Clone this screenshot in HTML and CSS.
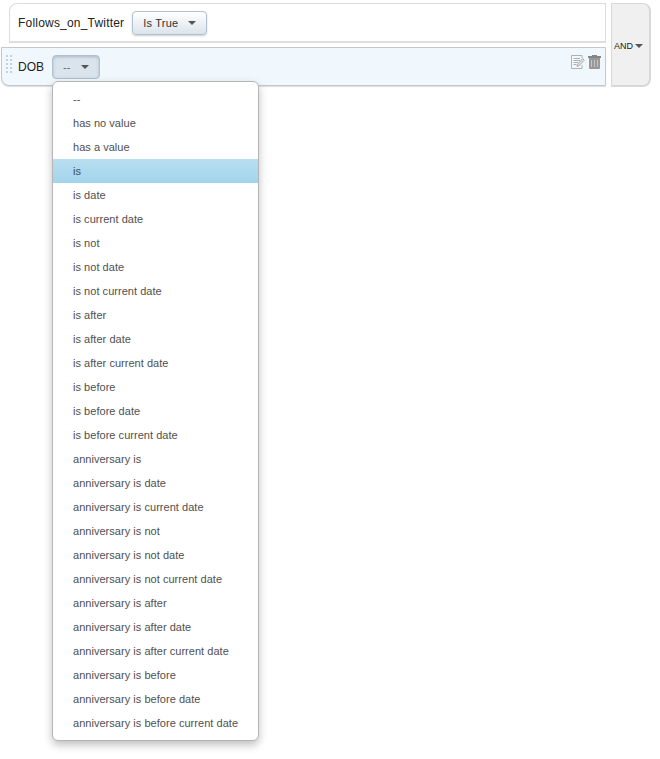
FILE: index.html
```html
<!DOCTYPE html>
<html lang="en">
<head>
<meta charset="utf-8">
<title>Filter rules</title>
<link rel="stylesheet" href="styles.css">
</head>
<body>
<div class="filter">
  <div class="rules">
    <div class="rule">
      <span class="field">Follows_on_Twitter</span>
      <button class="select"><span>Is True</span><i class="caret"></i></button>
    </div>
    <div class="rule rule-active">
      <svg class="grip" width="6" height="18" viewBox="0 0 6 18" fill="#c3d2dc">
        <path d="M0 0h2v2H0zM4 0h2v2H4zM0 4h2v2H0zM4 4h2v2H4zM0 8h2v2H0zM4 8h2v2H4zM0 12h2v2H0zM4 12h2v2H4zM0 16h2v2H0zM4 16h2v2H4z"/>
      </svg>
      <span class="field">DOB</span>
      <div class="picker">
        <button class="select select-open"><span>--</span><i class="caret"></i></button>
        <ul class="menu">
          <li>--</li>
          <li>has no value</li>
          <li>has a value</li>
          <li class="selected">is</li>
          <li>is date</li>
          <li>is current date</li>
          <li>is not</li>
          <li>is not date</li>
          <li>is not current date</li>
          <li>is after</li>
          <li>is after date</li>
          <li>is after current date</li>
          <li>is before</li>
          <li>is before date</li>
          <li>is before current date</li>
          <li>anniversary is</li>
          <li>anniversary is date</li>
          <li>anniversary is current date</li>
          <li>anniversary is not</li>
          <li>anniversary is not date</li>
          <li>anniversary is not current date</li>
          <li>anniversary is after</li>
          <li>anniversary is after date</li>
          <li>anniversary is after current date</li>
          <li>anniversary is before</li>
          <li>anniversary is before date</li>
          <li>anniversary is before current date</li>
        </ul>
      </div>
      <div class="actions">
        <svg width="14" height="14" viewBox="0 0 14 14" fill="none">
          <path d="M11 3V.5H.5v13H11V10" fill="#f4f7f9" stroke="#abb1b4"/>
          <path d="M2.500 3.500H9M2.500 5.500H9M2.500 7.500H7M2.500 9.500H5.500" stroke="#a9b0b4"/>
          <path d="M6 11.500l.7-2.300L11.600 3.600l1.700 1.500-5 5.500z" fill="#e2e6e8" stroke="#9fa5a8" stroke-width=".9"/>
        </svg>
        <svg width="13" height="14" viewBox="0 0 13 14">
          <path d="M4 0h5v1h4v2H0V1h4z" fill="#858585"/>
          <path d="M1 3h11v10q0 1-1 1H2q-1 0-1-1z" fill="#989898"/>
          <path d="M3.500 5v7M6.500 5v7M9.500 5v7" stroke="#c4c4c4"/>
        </svg>
      </div>
    </div>
  </div>
  <button class="operator"><span>AND</span><i class="caret"></i></button>
</div>
</body>
</html>
```
FILE: styles.css
```css
* { box-sizing: border-box; }
body {
  margin: 0;
  min-height: 759px;
  background: #fff;
  color: #222;
  font-family: "Liberation Sans", Arial, sans-serif;
}
button { font-family: inherit; margin: 0; }
.filter {
  display: flex;
  align-items: flex-start;
  gap: 5px;
  width: 651px;
  min-height: 759px;
  padding: 3px 0 0 1px;
}
.rules {
  display: flex;
  flex-direction: column;
  gap: 4px;
  width: 605px;
}
.rule {
  display: flex;
  align-items: center;
  height: 40px;
  margin-left: 8px;
  padding: 0 4px 0 8px;
  border: 1px solid #dcdcdc;
  border-bottom: 2px solid #dedede;
  border-radius: 8px 0 0 0;
}
.rule-active {
  margin-left: 0;
  padding-left: 4px;
  background: #f0f8fe;
  border-color: #c4c8ca;
  border-bottom-width: 1px;
  border-radius: 0 0 0 8px;
  height: 39px;
  box-shadow: 0 1px 1px #ddd;
}
.grip { margin: -5px 6px 0 0; }
.field { font-size: 12px; letter-spacing: .2px; white-space: nowrap; }
.rule-active .field { width: 26px; letter-spacing: 0; }
.select {
  display: flex;
  align-items: center;
  justify-content: space-between;
  width: 75px;
  height: 24px;
  margin-left: 8px;
  padding: 0 10px 0 10px;
  border: 1px solid #b2c1cd;
  border-radius: 4px;
  background: linear-gradient(#fff, #dbe4ec);
  box-shadow: 0 1px 2px rgba(0, 0, 0, .2);
  color: #333;
  font-size: 11px;
  letter-spacing: .2px;
}
.select-open {
  width: 48px;
  background: #dae4ed;
  box-shadow: inset 0 1px 3px rgba(60, 80, 100, .3);
  color: #666;
}
.caret {
  border: 4px solid transparent;
  border-top: 4px solid #555;
  border-bottom: 0;
}
.picker { position: relative; }
.menu {
  position: absolute;
  z-index: 1;
  top: 26px;
  left: 8px;
  width: 207px;
  margin: 0;
  padding: 5px 0;
  list-style: none;
  background: #fff;
  border: 1px solid #b5b5b5;
  border-radius: 6px;
  box-shadow: 0 4px 8px rgba(0, 0, 0, .25);
  color: #505050;
  font-size: 11px;
  letter-spacing: .035px;
}
.menu li {
  height: 24px;
  padding-left: 20px;
  line-height: 24px;
  white-space: nowrap;
}
.menu .selected { background: linear-gradient(#b9dff0, #a2d4ec); color: #344f60; }
.actions {
  display: flex;
  gap: 3px;
  margin: -9px 0 0 auto;
}
.operator {
  display: flex;
  align-items: center;
  gap: 2px;
  width: 40px;
  height: 84px;
  padding: 2px 0 0 2px;
  border: 1px solid #d8d8d8;
  border-right-width: 2px;
  border-bottom-width: 2px;
  border-radius: 0 8px 8px 0;
  background: #f0f0f0;
  color: #222;
  font-size: 9px;
}
```
